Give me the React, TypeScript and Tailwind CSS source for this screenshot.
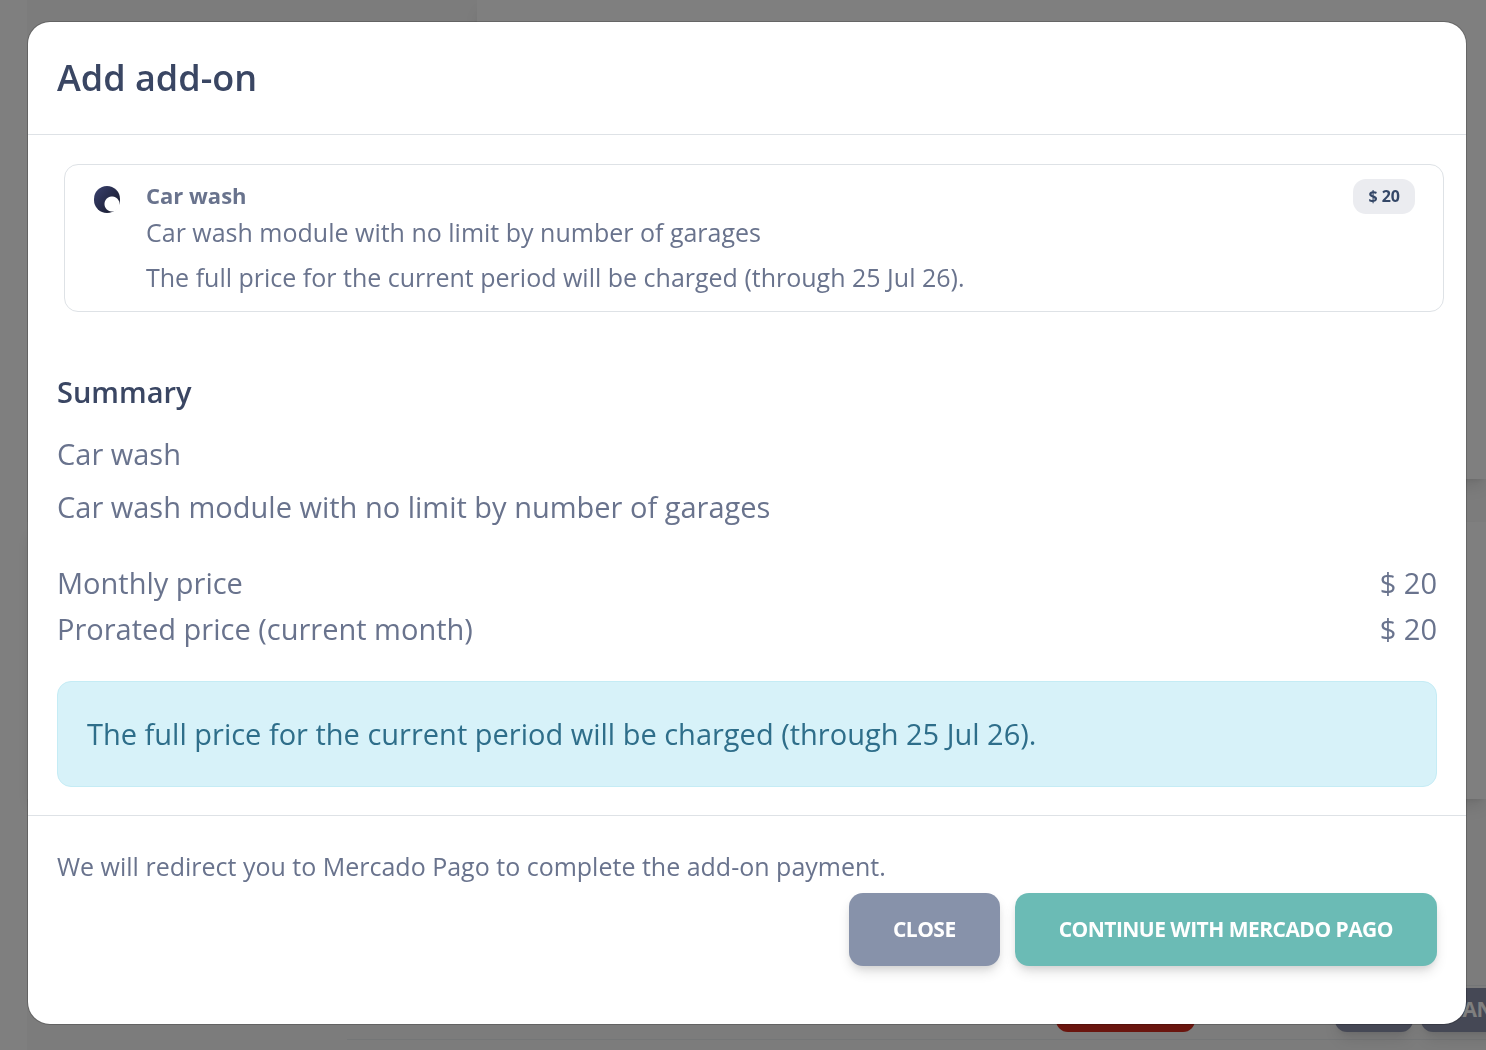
import { useState } from "react";

const addon = {
  id: "car-wash",
  name: "Car wash",
  description: "Car wash module with no limit by number of garages",
  price: "$ 20",
  notice: "The full price for the current period will be charged (through 25 Jul 26).",
};

const prices = [
  { label: "Monthly price", value: "$ 20" },
  { label: "Prorated price (current month)", value: "$ 20" },
];

function BillingPage() {
  return (
    <div aria-hidden="true" className="fixed inset-0 flex overflow-hidden bg-[#f8f8f8]">
      <div className="w-[27px] shrink-0 bg-white" />
      <div className="flex min-w-0 flex-1 flex-col">
        <div className="flex h-[479px] shrink-0">
          <div className="w-[450px] shrink-0" />
          <div className="flex-1 bg-white shadow-lg" />
        </div>
        <div className="mt-[43px] h-[277px] shrink-0 bg-white shadow-lg" />
        <div className="mt-auto mb-2.5 ml-80 flex shrink-0 items-end justify-end gap-2 border-y border-[#e9ecef] pt-0.5 pb-[7px]">
          <span className="mr-[132px] h-11 w-[139px] rounded-xl bg-[#d42a1c]" />
          <span className="h-11 w-[78px] rounded-xl bg-[#8a90aa] shadow-lg" />
          <span className="-mr-[71px] flex h-11 w-[136px] items-center justify-center rounded-xl bg-[#8a90aa] text-[21px] font-bold tracking-tight text-white shadow-lg">
            CANCEL
          </span>
        </div>
      </div>
    </div>
  );
}

function AddonOption({ checked, onSelect }: { checked: boolean; onSelect: () => void }) {
  return (
    <label
      htmlFor={addon.id}
      className="-mr-[7px] ml-[7px] flex cursor-pointer items-start rounded-[14px] border border-[#dee2e6] px-7 pt-3.5 pb-[13px]"
    >
      <input
        id={addon.id}
        type="radio"
        name="addon"
        checked={checked}
        onChange={onSelect}
        className="mt-[7px] mr-[26px] ml-px h-[27px] w-[26px] shrink-0 appearance-none rounded-full border border-[#e2e8f0] checked:border-0 checked:bg-[radial-gradient(circle_at_18px_18px,#fff_7px,transparent_8px),linear-gradient(310deg,#141727,#3a416f)]"
      />
      <span className="flex-1">
        <span className="block text-[22px] leading-[32px] font-bold">{addon.name}</span>
        <span className="block text-[25px] leading-[42px]">{addon.description}</span>
        <span className="mt-[3px] block text-[25px] leading-[42px]">{addon.notice}</span>
      </span>
      <span className="rounded-[13px] bg-[#ebecf0] px-[15px] text-base leading-[35px] font-bold text-[#344767]">
        {addon.price}
      </span>
    </label>
  );
}

export default function App() {
  const [selected, setSelected] = useState(addon.id);

  return (
    <div className="font-['Open_Sans',sans-serif] text-[#69738d]">
      <BillingPage />
      <div className="relative min-h-screen bg-black/50 pt-[22px] pr-5 pb-[26px] pl-7">
        <div
          role="dialog"
          aria-labelledby="modal-title"
          className="rounded-[22px] bg-white ring-1 ring-black/20"
        >
          <header className="border-b border-[#dee2e6] px-[29px] py-7">
            <h5 id="modal-title" className="text-4xl leading-[56px] font-semibold text-[#3a4663]">
              Add add-on
            </h5>
          </header>

          <div className="p-[29px] pb-7">
            <AddonOption
              checked={selected === addon.id}
              onSelect={() => setSelected(addon.id)}
            />

            <h6 className="mt-14 text-[29px] leading-[48px] font-semibold text-[#3a4663]">Summary</h6>
            <p className="mt-[15px] text-[29px] leading-[46px]">{addon.name}</p>
            <p className="mt-[7px] text-[29px] leading-[46px]">{addon.description}</p>

            <dl className="mt-[30px] text-[29px] leading-[46px]">
              {prices.map((row) => (
                <div key={row.label} className="flex justify-between">
                  <dt>{row.label}</dt>
                  <dd>{row.value}</dd>
                </div>
              ))}
            </dl>

            <div className="mt-[29px] rounded-[14px] border border-[#c5ecf5] bg-[#d7f2f9] p-[29px] text-[29px] leading-[46px] text-[#2e6e8a]">
              {addon.notice}
            </div>
          </div>

          <footer className="border-t border-[#dee2e6] px-[29px] pt-[29px] pb-[58px]">
            <p className="text-[25px] leading-[42px]">
              We will redirect you to Mercado Pago to complete the add-on payment.
            </p>
            <div className="mt-1.5 flex justify-end gap-[15px] text-[21px] leading-[33px] font-bold tracking-tight text-white">
              <button
                type="button"
                className="rounded-[14px] bg-[#8792aa] px-11 py-5 shadow-[0_7px_13px_-2px_rgba(0,0,0,0.14),0_4px_7px_-2px_rgba(0,0,0,0.08)]"
              >
                CLOSE
              </button>
              <button
                type="button"
                className="rounded-[14px] bg-[#6bbbb5] px-11 py-5 shadow-[0_7px_13px_-2px_rgba(0,0,0,0.14),0_4px_7px_-2px_rgba(0,0,0,0.08)]"
              >
                CONTINUE WITH MERCADO PAGO
              </button>
            </div>
          </footer>
        </div>
      </div>
    </div>
  );
}
